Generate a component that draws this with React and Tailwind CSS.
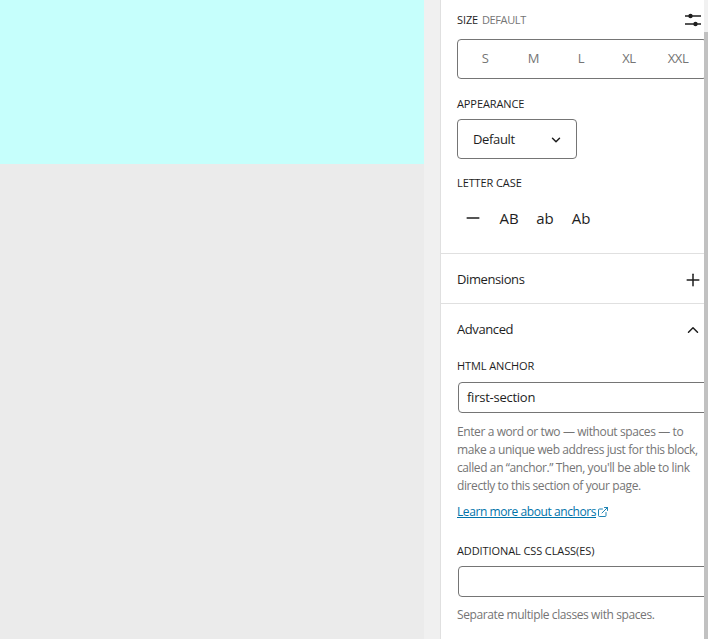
import { Minus, Plus, ChevronUp, ChevronDown, ExternalLink } from "lucide-react";

const font = "font-['Open_Sans','Noto_Sans',sans-serif]";

function Label({ children, className = "" }) {
  return <div className={"text-[11px] leading-4 text-[#1e1e1e] tracking-[-0.1px] " + className}>{children}</div>;
}

function SlidersIcon() {
  return (
    <svg width="16" height="16" viewBox="0 0 16 16" fill="none">
      <path d="M0 4h16M0 12h16" stroke="#1e1e1e" strokeWidth="1.5" />
      <circle cx="5.5" cy="4" r="2.2" fill="#1e1e1e" />
      <circle cx="10.5" cy="12" r="2.2" fill="#1e1e1e" />
    </svg>
  );
}

export default function App() {
  return (
    <div className={"flex h-[639px] w-[708px] overflow-hidden bg-[#ebebeb] " + font}>
      <div className="w-[424px] shrink-0">
        <div className="h-[164px] bg-[#c6fffc]" />
      </div>
      <div className="w-4 shrink-0 bg-[#f0f0f0]" />
      <div className="flex w-[268px] shrink-0 border-l border-[#e0e0e0] bg-white">
        <div className="w-[263px] shrink-0">
          <div className="px-4">
            <div className="-mr-[13px] flex h-[39px] items-center justify-between">
              <Label>
                SIZE <span className="ml-px text-[#757575] tracking-[-0.35px]">DEFAULT</span>
              </Label>
              <SlidersIcon />
            </div>
            <div className="flex h-10 w-[250px] items-center rounded-sm border border-[#757575] text-[13px] tracking-[-0.4px] text-[#757575]">
              <span className="w-[54px] text-center">S</span>
              <span className="w-[43px] text-center">M</span>
              <span className="w-[52px] text-center">L</span>
              <span className="w-[44px] text-center">XL</span>
              <span className="w-[54px] text-center">XXL</span>
            </div>
            <Label className="mt-[17px]">APPEARANCE</Label>
            <div className="mt-[7px] flex h-10 w-[120px] items-center justify-between rounded-sm border border-[#757575] pl-[15px] pr-[13px] pt-px text-[13px] tracking-[-0.35px] text-[#1e1e1e]">
              Default
              <ChevronDown size={14} strokeWidth={2.5} />
            </div>
            <Label className="mt-4">LETTER CASE</Label>
            <div className="mt-[9px] -ml-[2px] flex h-9 items-center text-[15px] text-[#1e1e1e]">
              <span className="flex w-[36px] justify-center"><Minus size={20} strokeWidth={1.8} /></span>
              <span className="w-[36px] text-center">AB</span>
              <span className="w-[36px] text-center">ab</span>
              <span className="w-[36px] text-center">Ab</span>
            </div>
          </div>
          <div className="mt-[17px] flex h-[50px] items-center justify-between border-t border-[#e0e0e0] pl-4 pr-px pt-[2px] text-[13px] tracking-[-0.4px] text-[#1e1e1e]">
            Dimensions
            <Plus size={20} strokeWidth={1.8} />
          </div>
          <div className="border-t border-[#e0e0e0]">
            <div className="flex h-[50px] items-center justify-between pl-4 pr-[2px] pt-[2px] text-[13px] tracking-[-0.4px] text-[#1e1e1e]">
              Advanced
              <ChevronUp size={18} strokeWidth={2} />
            </div>
            <div className="px-4 pt-1">
              <Label>HTML ANCHOR</Label>
              <div className="ml-px mt-2 flex h-[31px] w-[260px] items-center rounded-sm border border-[#757575] pl-2 pt-px text-[13px] tracking-[-0.25px] text-[#1e1e1e]">
                first-section
              </div>
              <p className="mt-[10px] w-[250px] text-[12px] leading-[18px] text-[#757575] tracking-[-0.4px]">
                Enter a word or two — without spaces — to make a unique web address just for this block, called an “anchor.” Then, you'll be able to link directly to this section of your page.
              </p>
              <a className="mt-2 flex items-center gap-px text-[12px] leading-[18px] tracking-[-0.42px] text-[#0073aa] underline">
                Learn more about anchors
                <ExternalLink size={12} strokeWidth={1.75} />
              </a>
              <Label className="mt-[22px]">ADDITIONAL CSS CLASS(ES)</Label>
              <div className="ml-px mt-[7px] h-[31px] w-[260px] rounded-sm border border-[#757575]" />
              <p className="mt-[9px] text-[12px] leading-[18px] text-[#757575] tracking-[-0.4px]">
                Separate multiple classes with spaces.
              </p>
            </div>
          </div>
        </div>
        <div className="flex-1 bg-[#f1f1f1] pt-[32px]"><div className="h-full bg-[#c1c1c1]" /></div>
      </div>
    </div>
  );
}
